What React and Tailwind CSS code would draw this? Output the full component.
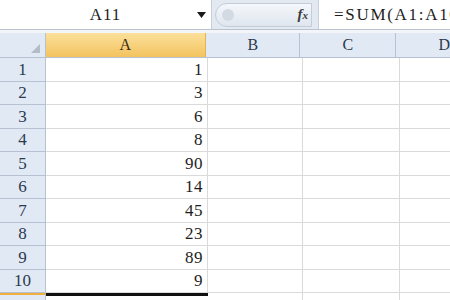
import React from 'react';

const values = [1, 3, 6, 8, 90, 14, 45, 23, 89, 9];

const serif = { fontFamily: '"Liberation Serif", "DejaVu Serif", serif' };

export default function App() {
  return (
    <div className="w-[450px] h-[300px] overflow-hidden bg-white text-[#1e1e1e]" style={serif}>
      {/* formula bar */}
      <div className="flex h-[30px] bg-[#e3e9f1] border-b border-[#b9c3d0]">
        <div className="relative w-[212px] bg-white border-r border-[#c8d0db] flex items-center justify-center text-[17px] tracking-[1px]">
          A11
          <svg className="absolute right-[5px] top-[12px]" width="9" height="6" viewBox="0 0 9 6">
            <path d="M0 0 H9 L4.5 6 Z" fill="#1a1a1a" />
          </svg>
        </div>
        <div className="w-[106px] flex items-center pl-[3px] pr-[6px]">
          <div className="flex-1 h-[24px] rounded-l-full border border-[#c3ccd8] bg-gradient-to-b from-[#f4f7fb] to-[#dfe6ee] flex items-center pl-[6px]">
            <div className="w-[12px] h-[12px] rounded-full bg-[#d3dae3]" />
            <span className="ml-auto mr-[3px] text-[15px] italic font-bold text-[#3c3c3c]">
              f<span className="text-[11px]">x</span>
            </span>
          </div>
        </div>
        <div className="flex-1 bg-white border-l border-[#c8d0db] flex items-center pl-[15px] text-[17px] tracking-[1.7px] whitespace-nowrap overflow-hidden">
          =SUM(A1:A10)
        </div>
      </div>
      <div className="h-[3px] bg-[#f3f5f8]" />

      {/* column header */}
      <div className="flex h-[25px] border-b border-[#b6c2d2] bg-[#e1e9f5] text-[16px] text-[#2c3a4d]">
        <div className="relative w-[46px] border-r border-[#b6c2d2]">
          <svg className="absolute right-[5px] bottom-[4px]" width="9" height="9" viewBox="0 0 9 9">
            <path d="M9 0 V9 H0 Z" fill="#b5bcc6" />
          </svg>
        </div>
        <div className="w-[162px] border-r border-[#e2b551] bg-gradient-to-b from-[#fbe09a] to-[#f3c35e] flex items-center justify-center text-[#3a2c10]">A</div>
        <div className="w-[95px] border-r border-[#b6c2d2] flex items-center justify-center">B</div>
        <div className="w-[97px] border-r border-[#b6c2d2] flex items-center justify-center">C</div>
        <div className="flex-1 flex items-center pl-[42px]">D</div>
      </div>

      {/* rows */}
      {values.map((v, i) => (
        <div key={i} className="flex h-[23.5px] text-[17px]">
          <div className="w-[46px] bg-[#e1e9f5] border-r border-b border-[#b6c2d2] flex items-center justify-center text-[#2c3a4d]">{i + 1}</div>
          <div className="w-[162px] border-r border-b border-[#dadada] flex items-center justify-end pr-[4px] tracking-[0.5px]">{v}</div>
          <div className="w-[95px] border-r border-b border-[#dadada]" />
          <div className="w-[97px] border-r border-b border-[#dadada]" />
          <div className="flex-1 border-b border-[#dadada]" />
        </div>
      ))}

      {/* row 11 (selected) */}
      <div className="flex h-[10px]">
        <div className="w-[46px] bg-[#e1e9f5] border-r border-[#b6c2d2] border-t-2 border-t-[#f0b040]" />
        <div className="w-[162px] border-t-[3px] border-[#111] bg-white" />
        <div className="w-[95px] border-r border-[#dadada]" />
        <div className="w-[97px] border-r border-[#dadada]" />
        <div className="flex-1" />
      </div>
    </div>
  );
}
